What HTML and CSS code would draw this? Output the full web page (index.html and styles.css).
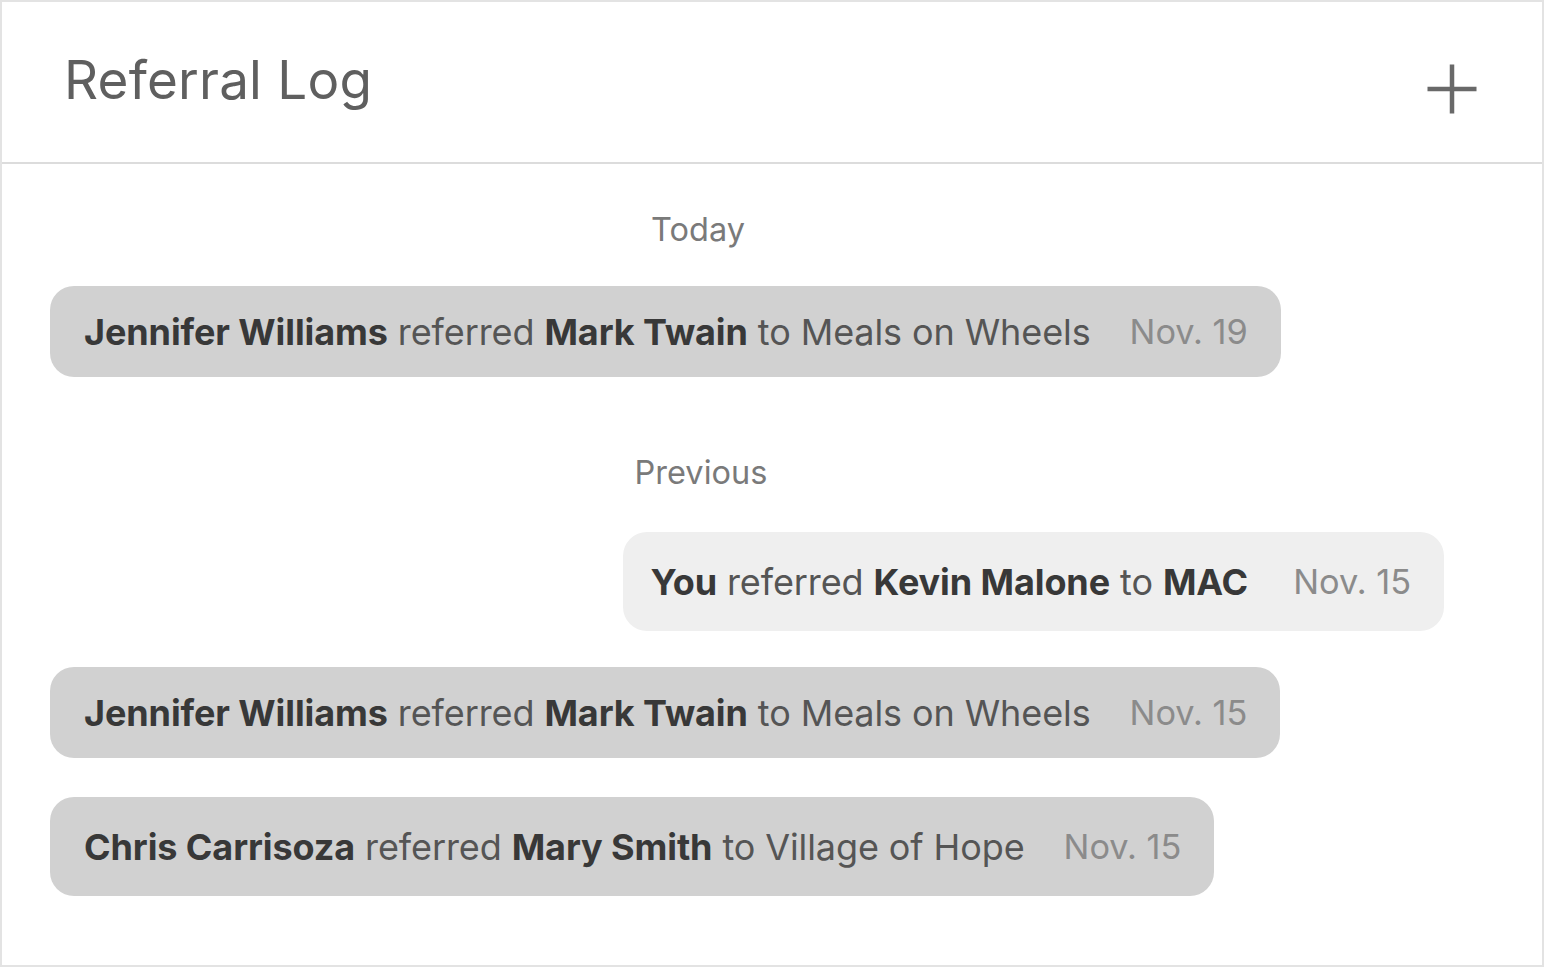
FILE: index.html
```html
<!DOCTYPE html>
<html>
<head>
<meta charset="utf-8">
<link rel="stylesheet" href="styles.css">
</head>
<body>
<div class="panel">
  <header class="header">
    <h1 class="title">Referral Log</h1>
    <button class="add" aria-label="Add referral">
      <svg width="52" height="52" viewBox="0 0 52 52"><path d="M26 1.5 V50.5 M1.5 26 H50.5" stroke="#696969" stroke-width="4.5" fill="none"/></svg>
    </button>
  </header>
  <main class="log">
    <div class="day">Today</div>
    <div class="row">
      <div class="bubble other"><span class="msg"><b>Jennifer Williams</b> referred <b>Mark Twain</b> to Meals on Wheels</span><span class="date">Nov. 19</span></div>
    </div>
    <div class="day day-prev">Previous</div>
    <div class="row row-self">
      <div class="bubble self"><span class="msg"><b>You</b> referred <b>Kevin Malone</b> to <b>MAC</b></span><span class="date">Nov. 15</span></div>
    </div>
    <div class="row row-gap">
      <div class="bubble other"><span class="msg"><b>Jennifer Williams</b> referred <b>Mark Twain</b> to Meals on Wheels</span><span class="date">Nov. 15</span></div>
    </div>
    <div class="row">
      <div class="bubble other tall"><span class="msg"><b>Chris Carrisoza</b> referred <b>Mary Smith</b> to Village of Hope</span><span class="date">Nov. 15</span></div>
    </div>
  </main>
</div>
</body>
</html>
```
FILE: styles.css
```css
* { box-sizing: border-box; }
html, body { margin: 0; padding: 0; background: #ffffff; }
body { font-family: Inter, "Noto Sans", "Liberation Sans", sans-serif; }

.panel {
  width: 1544px;
  height: 967px;
  border: 2px solid #e3e3e3;
  background: #fff;
  display: flex;
  flex-direction: column;
}

.header {
  height: 162px;
  border-bottom: 2px solid #dcdcdc;
  display: flex;
  align-items: center;
  justify-content: space-between;
  padding: 0 64px 0 62px;
}

.title {
  margin: 0;
  font-size: 53px;
  font-weight: 400;
  color: #5f5f5f;
  letter-spacing: 0.2px;
  padding-bottom: 4px;
}

.add {
  border: 0;
  background: none;
  padding: 0;
  width: 52px;
  height: 52px;
  display: flex;
  margin-top: 14px;
}

.log {
  display: flex;
  flex-direction: column;
  padding: 46px 98px 0 48px;
}

.day {
  text-align: center;
  font-size: 32.5px;
  color: #7a7a7a;
  padding-right: 98px;
  line-height: 40px;
  margin-bottom: 36px;
}
.day-prev { margin-top: 40px; margin-bottom: 39px; padding-right: 92px; }

.row { display: flex; margin-bottom: 36px; }
.row-gap { margin-bottom: 39px; }
.row-self { justify-content: flex-end; }

.bubble {
  display: flex;
  align-items: center;
  height: 91px;
  padding: 0 33px 0 34px;
  border-radius: 24px;
  font-size: 36px;
  white-space: nowrap;
}
.other { background: #d1d1d1; }
.tall { height: 99px; }
.self { background: #efefef; height: 99px; padding-left: 27px; }

.msg { letter-spacing: -0.1px; color: #555; }
.msg b { font-weight: 700; color: #383838; }

.date {
  margin-left: 39px;
  font-size: 34.3px;
  color: #8b8b8b;
}
.self .date { margin-left: 45px; }
```
